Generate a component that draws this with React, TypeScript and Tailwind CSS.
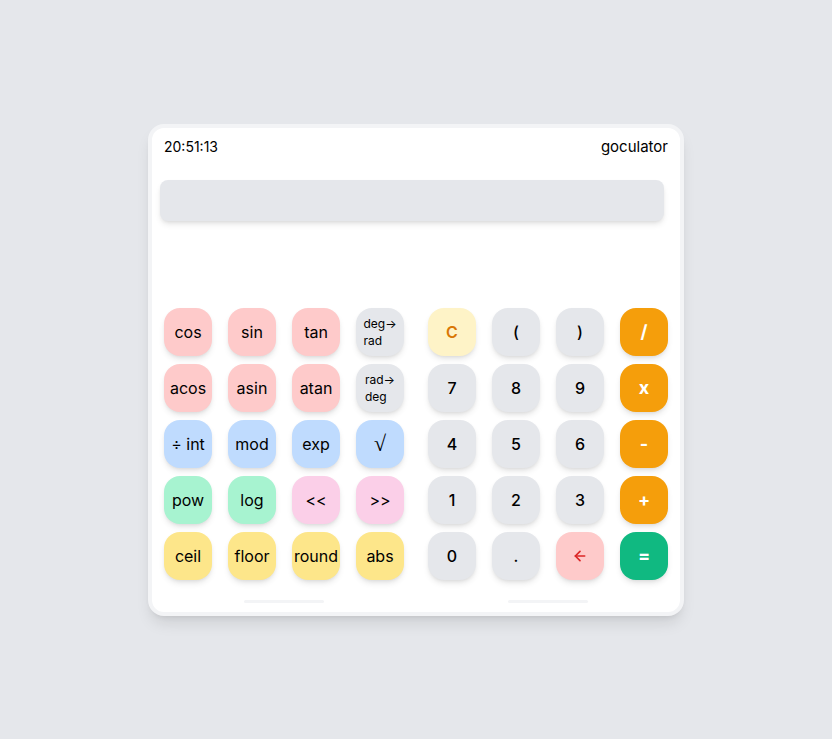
import { ArrowLeft } from "lucide-react"

type Key = { label: React.ReactNode; cls: string }

const red = "bg-[#fecaca] text-black"
const gray = "bg-[#e5e7eb] text-black"
const blue = "bg-[#bfdbfe] text-black"
const green = "bg-[#a7f3d0] text-black"
const pink = "bg-[#fbcfe8] text-black"
const yellow = "bg-[#fde68a] text-black"
const op = "bg-[#f59e0b] text-white font-bold text-lg"
const num = "bg-[#e5e7eb] text-black font-medium"

const twoLine = (a: string, b: string) => (
  <span className="text-left text-xs leading-[17px]">
    {a}
    <br />
    {b}
  </span>
)

const leftKeys: Key[] = [
  { label: "cos", cls: red },
  { label: "sin", cls: red },
  { label: "tan", cls: red },
  { label: twoLine("deg→", "rad"), cls: gray },
  { label: "acos", cls: red },
  { label: "asin", cls: red },
  { label: "atan", cls: red },
  { label: twoLine("rad→", "deg"), cls: gray },
  { label: "÷ int", cls: blue },
  { label: "mod", cls: blue },
  { label: "exp", cls: blue },
  { label: <span className="font-['DejaVu_Sans'] text-[22px] font-light">√</span>, cls: blue },
  { label: "pow", cls: green },
  { label: "log", cls: green },
  { label: "<<", cls: pink },
  { label: ">>", cls: pink },
  { label: "ceil", cls: yellow },
  { label: "floor", cls: yellow },
  { label: "round", cls: yellow },
  { label: "abs", cls: yellow },
]

const rightKeys: Key[] = [
  { label: "C", cls: "bg-[#fef3c7] text-[#d97706] font-semibold" },
  { label: "(", cls: num },
  { label: ")", cls: num },
  { label: "/", cls: op },
  { label: "7", cls: num },
  { label: "8", cls: num },
  { label: "9", cls: num },
  { label: "x", cls: op },
  { label: "4", cls: num },
  { label: "5", cls: num },
  { label: "6", cls: num },
  { label: "-", cls: op },
  { label: "1", cls: num },
  { label: "2", cls: num },
  { label: "3", cls: num },
  { label: "+", cls: op },
  { label: "0", cls: num },
  { label: ".", cls: num },
  { label: <ArrowLeft size={16} strokeWidth={2.5} />, cls: "bg-[#fecaca] text-[#dc2626]" },
  { label: "=", cls: "bg-[#10b981] text-white font-bold text-lg" },
]

function Pad({ keys }: { keys: Key[] }) {
  return (
    <div className="grid grid-cols-4 gap-x-4 gap-y-2">
      {keys.map((k, i) => (
        <button
          key={i}
          className={`flex h-12 w-12 items-center justify-center rounded-2xl text-base shadow-md ${k.cls}`}
        >
          {k.label}
        </button>
      ))}
    </div>
  )
}

export default function App() {
  return (
    <div
      className="flex h-screen items-center justify-center bg-[#e5e7eb]"
      style={{ fontFamily: "Inter, 'Noto Sans', sans-serif" }}
    >
      <div className="w-[536px] rounded-2xl border-4 border-[#f3f4f6] bg-white px-3 pt-2 pb-[9px] shadow-lg">
        <div className="flex h-7 items-start justify-between">
          <span className="text-sm leading-[22px] text-black">20:51:13</span>
          <span className="text-[15px] leading-[22px] text-black">goculator</span>
        </div>
        <div className="-ml-1 mt-4 h-[41px] w-[504px] rounded-lg bg-[#e5e7eb] shadow-md" />
        <div className="mt-[87px] flex gap-6">
          <Pad keys={leftKeys} />
          <Pad keys={rightKeys} />
        </div>
        <div className="mt-5 flex gap-6">
          <div className="flex w-60 justify-center">
            <div className="h-[3px] w-20 rounded-full bg-[#f3f4f6]" />
          </div>
          <div className="flex w-60 justify-center">
            <div className="h-[3px] w-20 rounded-full bg-[#f3f4f6]" />
          </div>
        </div>
      </div>
    </div>
  )
}
